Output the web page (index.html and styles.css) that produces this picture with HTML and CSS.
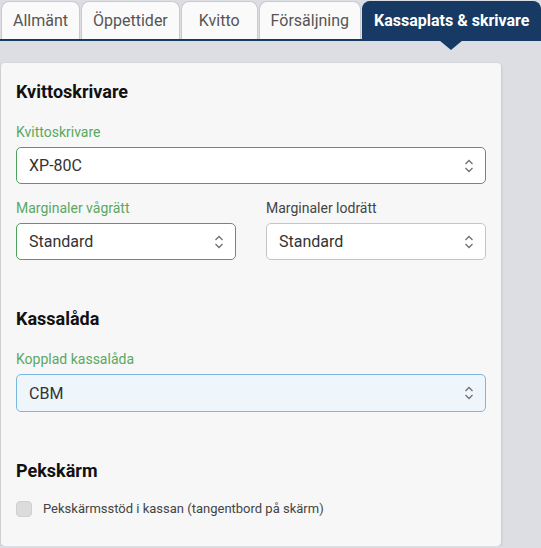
FILE: index.html
```html
<!DOCTYPE html>
<html lang="sv">
<head>
<meta charset="utf-8">
<title>Kassaplats &amp; skrivare</title>
<link rel="stylesheet" href="styles.css">
</head>
<body>
<nav class="tabs">
  <div class="tab">Allmänt</div>
  <div class="tab">Öppettider</div>
  <div class="tab tab-kvitto">Kvitto</div>
  <div class="tab">Försäljning</div>
  <div class="tab active">Kassaplats &amp; skrivare</div>
</nav>
<main class="card">
  <h2 class="heading">Kvittoskrivare</h2>
  <div class="field">
    <label class="label green">Kvittoskrivare</label>
    <div class="select green-b"><span>XP-80C</span><svg class="chev" viewBox="0 0 10 14" width="10" height="14"><path d="M1.5 5 L5 1.5 L8.5 5 M1.5 9 L5 12.5 L8.5 9" fill="none" stroke="#707070" stroke-width="1.3"/></svg></div>
  </div>
  <div class="row">
    <div class="field">
      <label class="label green">Marginaler vågrätt</label>
      <div class="select green-b"><span>Standard</span><svg class="chev" viewBox="0 0 10 14" width="10" height="14"><path d="M1.5 5 L5 1.5 L8.5 5 M1.5 9 L5 12.5 L8.5 9" fill="none" stroke="#707070" stroke-width="1.3"/></svg></div>
    </div>
    <div class="field">
      <label class="label">Marginaler lodrätt</label>
      <div class="select grey-b"><span>Standard</span><svg class="chev" viewBox="0 0 10 14" width="10" height="14"><path d="M1.5 5 L5 1.5 L8.5 5 M1.5 9 L5 12.5 L8.5 9" fill="none" stroke="#707070" stroke-width="1.3"/></svg></div>
    </div>
  </div>
  <h2 class="heading section">Kassalåda</h2>
  <div class="field">
    <label class="label green">Kopplad kassalåda</label>
    <div class="select blue-b"><span>CBM</span><svg class="chev" viewBox="0 0 10 14" width="10" height="14"><path d="M1.5 5 L5 1.5 L8.5 5 M1.5 9 L5 12.5 L8.5 9" fill="none" stroke="#707070" stroke-width="1.3"/></svg></div>
  </div>
  <h2 class="heading section2">Pekskärm</h2>
  <div class="check-row">
    <span class="checkbox"></span>
    <span class="check-text">Pekskärmsstöd i kassan (tangentbord på skärm)</span>
  </div>
</main>
</body>
</html>
```

FILE: styles.css
```css
html, body {
  margin: 0;
  padding: 0;
  background: #dddee3;
  font-family: Roboto, "Liberation Sans", Arial, sans-serif;
  overflow: hidden;
}

.tabs {
  display: flex;
  padding: 1px 0 0 1px;
  border-bottom: 2px solid #163a63;
  height: 38px;
  white-space: nowrap;
}

.tab {
  box-sizing: border-box;
  height: 38px;
  padding: 0 11px;
  margin-right: 1px;
  background: #fafafa;
  border: 1px solid #c9cacf;
  border-bottom: none;
  border-radius: 8px 8px 0 0;
  font-size: 16px;
  line-height: 37px;
  color: #555;
  flex: none;
}

.tab-kvitto {
  padding: 0 17px;
}

.tab.active {
  position: relative;
  background: #163a63;
  border-color: #163a63;
  color: #fff;
  font-weight: 700;
  margin-right: 0;
}

.tab.active::after {
  content: "";
  position: absolute;
  left: 76px;
  top: 38px;
  border-left: 12px solid transparent;
  border-right: 12px solid transparent;
  border-top: 10px solid #163a63;
}

.card {
  display: block;
  box-sizing: border-box;
  width: 500px;
  margin: 22px 0 0 1px;
  padding: 18px 15px 29px 15px;
  background: #f7f7f7;
  border-radius: 4px;
  box-shadow: 0 1px 3px rgba(0,0,0,0.18);
}

.heading {
  margin: 0;
  font-size: 18px;
  line-height: 22px;
  font-weight: 700;
  color: #111;
}

.heading.section {
  margin-top: 48px;
}

.heading.section2 {
  margin-top: 48px;
}

.field {
  display: flex;
  flex-direction: column;
  margin-top: 21px;
}

.row {
  display: grid;
  grid-template-columns: 1fr 1fr;
  column-gap: 30px;
}

.row .field {
  margin-top: 16px;
}

.label {
  font-size: 14px;
  line-height: 16px;
  color: #444;
  margin-bottom: 7px;
}

.label.green {
  color: #5aa862;
}

.select {
  box-sizing: border-box;
  height: 37px;
  display: flex;
  align-items: center;
  justify-content: space-between;
  padding: 0 11px 0 12px;
  border-radius: 5px;
  background: #fff;
  font-size: 16px;
  color: #333;
}

.green-b {
  border: 1px solid #4fa05a;
}

.grey-b {
  border: 1px solid #c4c4c4;
}

.blue-b {
  border: 1px solid #7ab6df;
  background: #eef5fb;
  height: 38px;
}

.chev {
  display: block;
}

.check-row {
  display: flex;
  align-items: center;
  margin-top: 19px;
}

.checkbox {
  box-sizing: border-box;
  width: 16px;
  height: 16px;
  border-radius: 4px;
  background: #dcdcdc;
  border: 1px solid #d0d0d0;
  margin-right: 11px;
  flex: none;
}

.check-text {
  font-size: 13px;
  color: #444;
  line-height: 16px;
}
```
